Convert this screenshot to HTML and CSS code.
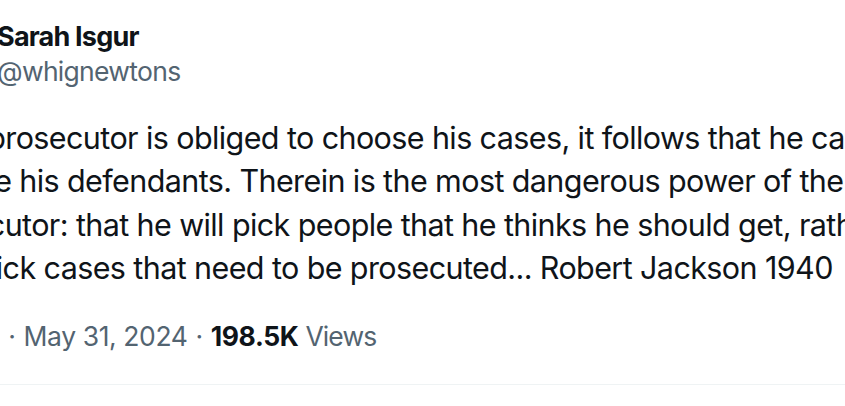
FILE: index.html
```html
<!DOCTYPE html>
<html lang="en">
<head>
    <meta charset="UTF-8">
    <meta name="viewport" content="width=device-width, initial-scale=1.0">
    <title>Sarah Isgur on X</title>
    <link rel="stylesheet" href="styles.css">
</head>
<body>
    <article class="tweet">
        <div class="tweet-header">
            <div class="avatar"></div>
            <div class="user-info">
                <div class="display-name">Sarah Isgur</div>
                <div class="handle">@whignewtons</div>
            </div>
        </div>

        <div class="tweet-text">
            If the prosecutor is obliged to choose his cases, it follows that he can<br>
            choose his defendants. Therein is the most dangerous power of the<br>
            prosecutor: that he will pick people that he thinks he should get, rather<br>
            than pick cases that need to be prosecuted... Robert Jackson 1940
        </div>

        <div class="tweet-meta">
            <span class="time">1:41 PM</span>
            <span class="sep">·</span>
            <span class="date">May 31, 2024</span>
            <span class="sep">·</span>
            <span class="views"><strong>198.5K</strong> <span class="views-label">Views</span></span>
        </div>

        <div class="divider"></div>
    </article>
</body>
</html>
```

FILE: styles.css
```css
:root {
    --text-color: #0f1419;
    --muted-color: #536471;
    --border-color: #eff3f4;
}

body {
    margin: 0;
    background-color: #ffffff;
    color: var(--text-color);
    font-family: Inter, "Noto Sans", sans-serif;
    overflow: hidden;
}

/* the shot is cropped: avatar and line starts sit off the left edge */
.tweet {
    margin-left: -91px;
    width: 1100px;
}

.tweet-header {
    display: flex;
    gap: 18px;
    padding-top: 19px;
}

.avatar {
    width: 70px;
    height: 70px;
    border-radius: 50%;
    background-color: #cfd9de;
}

.display-name {
    font-size: 27px;
    font-weight: 700;
    letter-spacing: -0.8px;
    line-height: 35px;
}

.handle {
    font-size: 26.5px;
    letter-spacing: -0.7px;
    line-height: 35px;
    color: var(--muted-color);
}

.tweet-text {
    margin-top: 27px;
    font-size: 30.5px;
    letter-spacing: -0.6px;
    line-height: 43.3px;
    white-space: nowrap;
}

.tweet-meta {
    margin-top: 29px;
    display: flex;
    gap: 8px;
    font-size: 26.5px;
    letter-spacing: -0.4px;
    line-height: 36px;
    color: var(--muted-color);
}

.views strong {
    color: var(--text-color);
    font-weight: 700;
}

.views-label {
    letter-spacing: -0.9px;
}

.divider {
    margin-top: 30px;
    height: 1px;
    background-color: var(--border-color);
}
```
